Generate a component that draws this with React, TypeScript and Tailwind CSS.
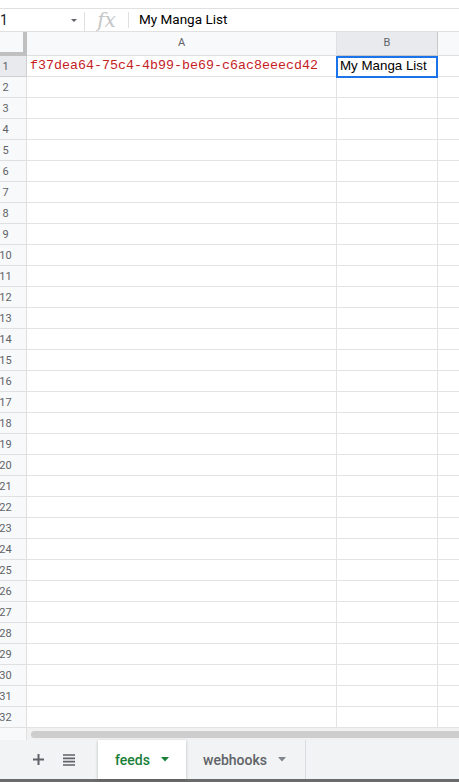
import React from "react";

const rows = Array.from({ length: 32 }, (_, i) => i + 1);

export default function App() {
  return (
    <div
      className="w-[459px] h-[782px] overflow-hidden bg-white flex flex-col"
      style={{ fontFamily: "Roboto, 'Liberation Sans', sans-serif" }}
    >
      <div className="h-[9px] shrink-0 border-b border-[#e0e0e0]" />
      {/* formula bar */}
      <div className="h-[23px] shrink-0 border-b border-[#e0e0e0] flex items-center">
        <div className="w-[84px] h-full relative flex items-center overflow-hidden">
          <span className="ml-0 text-[14px] text-[#202124] leading-none">1</span>
          <svg className="absolute left-[71px] top-[10px]" width="6" height="4" viewBox="0 0 6 4">
            <path d="M0 0 L6 0 L3 3 Z" fill="#5f6368" />
          </svg>
        </div>
        <div className="w-px h-[19px] self-end bg-[#e0e0e0]" />
        <div className="w-[43px] h-full flex items-center justify-center">
          <span
            className="text-[20px] italic leading-none text-[#c6c6c6]"
            style={{ fontFamily: "'DejaVu Serif', 'Liberation Serif', serif" }}
          >
            fx
          </span>
        </div>
        <div className="w-px h-[16px] bg-[#e0e0e0]" />
        <span className="ml-[10px] text-[13.5px] text-[#000] leading-none" style={{ fontFamily: "Roboto, sans-serif" }}>
          My Manga List
        </span>
      </div>
      {/* column headers */}
      <div className="h-[24px] shrink-0 flex text-[11px] text-[#5f6368]">
        <div className="w-[27px] h-full bg-[#f8f9fa] border-r-4 border-b-4 border-[#c0c0c0]" />
        <div className="w-[310px] h-full bg-[#f8f9fa] border-r border-b border-[#e0e0e0] flex items-center justify-center">
          A
        </div>
        <div className="w-[101px] h-full bg-[#e8eaed] border-r border-b border-[#c8c8c8] flex items-center justify-center text-[#5f6368]">
          B
        </div>
        <div className="flex-1 h-full bg-[#f8f9fa] border-b border-[#e0e0e0]" />
      </div>
      {/* rows */}
      <div className="relative shrink-0">
        {rows.map((r) => (
          <div key={r} className="h-[21px] flex">
            <div
              className={
                r === 1
                  ? "w-[27px] h-full bg-[#e8eaed] border-r border-b border-[#d0d0d0] overflow-hidden flex items-center"
                  : "w-[27px] h-full bg-[#f8f9fa] border-r border-b border-[#e0e0e0] overflow-hidden flex items-center"
              }
            >
              <span className="w-[11px] shrink-0 text-center text-[11px] text-[#5f6368] leading-none whitespace-nowrap flex justify-center">
                {r}
              </span>
            </div>
            <div className="w-[310px] h-full border-r border-b border-[#e2e3e3] flex items-center overflow-hidden">
              {r === 1 && (
                <span
                  className="ml-[3px] text-[13.33px] text-[#c5221f] leading-none whitespace-nowrap"
                  style={{ fontFamily: "'Liberation Mono', monospace" }}
                >
                  f37dea64-75c4-4b99-be69-c6ac8eeecd42
                </span>
              )}
            </div>
            <div className="w-[101px] h-full border-r border-b border-[#e2e3e3] flex items-center overflow-hidden">
              {r === 1 && (
                <span
                  className="ml-[3px] text-[13.33px] text-black leading-none whitespace-nowrap"
                  style={{ fontFamily: "'Liberation Sans', Arial, sans-serif" }}
                >
                  My Manga List
                </span>
              )}
            </div>
            <div className="flex-1 h-full border-b border-[#e2e3e3]" />
          </div>
        ))}
        <div className="absolute left-[336px] top-0 w-[102px] h-[22px] border-2 border-[#1a73e8]" />
      </div>
      {/* scrollbar */}
      <div className="h-[12px] shrink-0 flex">
        <div className="w-[27px] h-full bg-[#f8f9fa] border-r border-[#e0e0e0]" />
        <div className="flex-1 h-full bg-[#f1f1f1] flex items-center pl-[4px]">
          <div className="w-full h-[7px] rounded-l-full bg-[#cdcdcd]" />
        </div>
      </div>
      {/* tab bar */}
      <div className="h-[39px] shrink-0 bg-[#f1f3f4] flex items-stretch">
        <div className="w-[98px] flex items-center">
          <svg className="ml-[33px]" width="11" height="11" viewBox="0 0 11 11">
            <path d="M5.5 0 V11 M0 5.5 H11" stroke="#5f6368" strokeWidth="2" />
          </svg>
          <svg className="ml-[19px]" width="12" height="12" viewBox="0 0 12 12">
            <path d="M0 1 H12 M0 4.33 H12 M0 7.67 H12 M0 11 H12" stroke="#5f6368" strokeWidth="1.6" />
          </svg>
        </div>
        <div className="w-[88px] bg-white shadow-[0_1px_3px_rgba(60,64,67,0.3)] flex items-center z-10">
          <span className="ml-[17px] text-[14px] font-medium text-[#188038] leading-none">feeds</span>
          <svg className="ml-[11px]" width="8" height="5" viewBox="0 0 8 5">
            <path d="M0 0 L8 0 L4 4.5 Z" fill="#188038" />
          </svg>
        </div>
        <div className="w-[120px] border-r border-[#dadce0] flex items-center">
          <span className="ml-[17px] text-[14px] font-medium text-[#5f6368] leading-none">webhooks</span>
          <svg className="ml-[11px]" width="8" height="5" viewBox="0 0 8 5">
            <path d="M0 0 L8 0 L4 4.5 Z" fill="#80868b" />
          </svg>
        </div>
        <div className="flex-1" />
      </div>
      <div className="h-[3px] shrink-0 bg-[#6b6b6b]" />
    </div>
  );
}
